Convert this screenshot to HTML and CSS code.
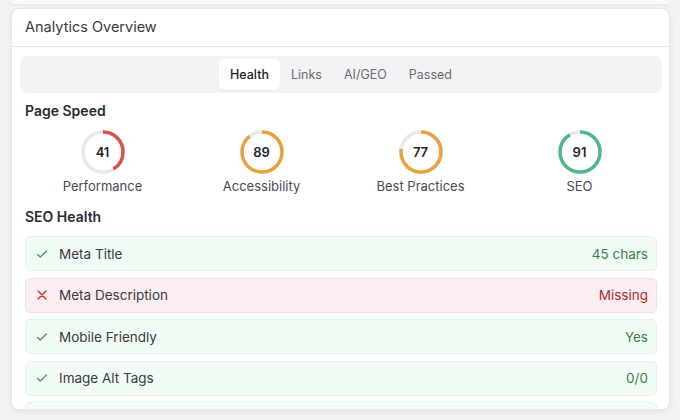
FILE: index.html
```html
<!DOCTYPE html>
<html lang="en">
<head>
  <meta charset="UTF-8">
  <meta name="viewport" content="width=device-width, initial-scale=1.0">
  <title>Analytics Overview</title>
  <link rel="stylesheet" href="styles.css">
</head>
<body>
  <div class="prevCard"></div>

  <div class="card">
    <div class="cardHeader">Analytics Overview</div>

    <div class="cardBody">
      <div class="tabs">
        <button class="tab active">Health</button>
        <button class="tab">Links</button>
        <button class="tab">AI/GEO</button>
        <button class="tab">Passed</button>
      </div>

      <h3 class="sectionTitle">Page Speed</h3>
      <div class="gauges">
        <div class="gauge">
          <div class="ring">
            <svg width="46" height="46" viewBox="0 0 46 46">
              <circle class="track" cx="23" cy="23" r="20"></circle>
              <circle class="arc red" cx="23" cy="23" r="20" stroke-dasharray="51.5 125.7"></circle>
            </svg>
            <span class="score">41</span>
          </div>
          <div class="gaugeLabel">Performance</div>
        </div>
        <div class="gauge">
          <div class="ring">
            <svg width="46" height="46" viewBox="0 0 46 46">
              <circle class="track" cx="23" cy="23" r="20"></circle>
              <circle class="arc orange" cx="23" cy="23" r="20" stroke-dasharray="111.8 125.7"></circle>
            </svg>
            <span class="score">89</span>
          </div>
          <div class="gaugeLabel">Accessibility</div>
        </div>
        <div class="gauge">
          <div class="ring">
            <svg width="46" height="46" viewBox="0 0 46 46">
              <circle class="track" cx="23" cy="23" r="20"></circle>
              <circle class="arc orange" cx="23" cy="23" r="20" stroke-dasharray="96.8 125.7"></circle>
            </svg>
            <span class="score">77</span>
          </div>
          <div class="gaugeLabel">Best Practices</div>
        </div>
        <div class="gauge">
          <div class="ring">
            <svg width="46" height="46" viewBox="0 0 46 46">
              <circle class="track" cx="23" cy="23" r="20"></circle>
              <circle class="arc green" cx="23" cy="23" r="20" stroke-dasharray="114.4 125.7"></circle>
            </svg>
            <span class="score">91</span>
          </div>
          <div class="gaugeLabel">SEO</div>
        </div>
      </div>

      <h3 class="sectionTitle seoTitle">SEO Health</h3>
      <div class="checks">
        <div class="check pass">
          <svg class="icon" viewBox="0 0 16 16"><path d="M3 8.5l3 3 7-7"></path></svg>
          <span class="checkName">Meta Title</span>
          <span class="checkValue">45 chars</span>
        </div>
        <div class="check fail">
          <svg class="icon" viewBox="0 0 16 16"><path d="M3.5 3.5l9 9M12.5 3.5l-9 9"></path></svg>
          <span class="checkName">Meta Description</span>
          <span class="checkValue">Missing</span>
        </div>
        <div class="check pass">
          <svg class="icon" viewBox="0 0 16 16"><path d="M3 8.5l3 3 7-7"></path></svg>
          <span class="checkName">Mobile Friendly</span>
          <span class="checkValue">Yes</span>
        </div>
        <div class="check pass">
          <svg class="icon" viewBox="0 0 16 16"><path d="M3 8.5l3 3 7-7"></path></svg>
          <span class="checkName">Image Alt Tags</span>
          <span class="checkValue">0/0</span>
        </div>
        <!-- next row scrolls under the card edge -->
        <div class="check pass"></div>
      </div>
    </div>
  </div>
</body>
</html>
```

FILE: styles.css
```css
body {
  margin: 0;
  background-color: #f3f3f5;
  font-family: Inter, "Noto Sans", sans-serif;
  color: #2b2b33;
  height: 420px;
  overflow: hidden;
}

.prevCard {
  height: 4px;
  margin: 0 11px;
  background-color: #fafafb;
  box-shadow: 0 1px 3px rgba(0, 0, 0, 0.06);
}

.card {
  margin: 4px 10px 0 11px;
  height: 402px;
  background-color: #fff;
  border: 1px solid #e7e7eb;
  border-radius: 8px;
  box-shadow: 0 2px 6px rgba(0, 0, 0, 0.07);
  overflow: hidden;
  box-sizing: border-box;
}

.cardHeader {
  height: 37px;
  line-height: 36px;
  padding: 0 13px;
  font-size: 14.5px;
  color: #3a3a44;
  border-bottom: 1px solid #e4e4e8;
}

.cardBody {
  padding: 9px 7px 0 8px;
}

.tabs {
  display: flex;
  justify-content: center;
  height: 37px;
  padding: 3px;
  box-sizing: border-box;
  background-color: #f3f3f5;
  border-radius: 8px;
}

.tab {
  border: none;
  background: none;
  padding: 0 11px;
  font-family: inherit;
  font-size: 12.5px;
  color: #6b6b75;
  border-radius: 6px;
}

.tab.active {
  background-color: #fff;
  color: #222228;
  font-weight: 500;
  box-shadow: 0 1px 2px rgba(0, 0, 0, 0.04);
}

.sectionTitle {
  margin: 9px 5px 0;
  font-size: 14px;
  font-weight: 600;
  color: #2b2b35;
}

.seoTitle {
  margin-top: 14px;
}

.gauges {
  display: grid;
  grid-template-columns: repeat(4, 1fr);
  padding: 0 3px;
  margin-top: 10px;
}

.gauge {
  display: flex;
  flex-direction: column;
  align-items: center;
}

.ring {
  position: relative;
  width: 46px;
  height: 46px;
}

.ring svg {
  display: block;
  transform: rotate(-90deg);
}

.track,
.arc {
  fill: none;
  stroke-width: 3.5;
}

.track {
  stroke: #e8e8eb;
}

.arc.red { stroke: #d9534f; }
.arc.orange { stroke: #e9a23b; }
.arc.green { stroke: #52b788; }

.score {
  position: absolute;
  inset: 0;
  display: flex;
  align-items: center;
  justify-content: center;
  font-size: 13px;
  font-weight: 600;
  color: #24242a;
}

.gaugeLabel {
  margin-top: 3px;
  font-size: 13px;
  color: #4a4a55;
}

.checks {
  margin: 11px 5px 0;
  display: flex;
  flex-direction: column;
  gap: 6.5px;
}

.check {
  display: flex;
  align-items: center;
  height: 35px;
  box-sizing: border-box;
  padding: 0 8px 0 9px;
  border-radius: 5px;
  font-size: 13.5px;
  flex-shrink: 0;
}

.check.pass {
  background-color: #f1fcf4;
  border: 1px solid #def6e5;
}

.check.fail {
  background-color: #fdeff1;
  border: 1px solid #f9dce0;
}

.icon {
  width: 14px;
  height: 14px;
  fill: none;
  stroke-width: 1.6;
  stroke-linecap: round;
  stroke-linejoin: round;
  margin-right: 10px;
}

.pass .icon { stroke: #4a9a5c; }
.fail .icon { stroke: #d93636; stroke-width: 1.7; }

.checkName {
  flex: 1;
  color: #3a3a44;
}

.pass .checkValue { color: #3e7d4c; }
.fail .checkValue { color: #b32a2a; }
```
